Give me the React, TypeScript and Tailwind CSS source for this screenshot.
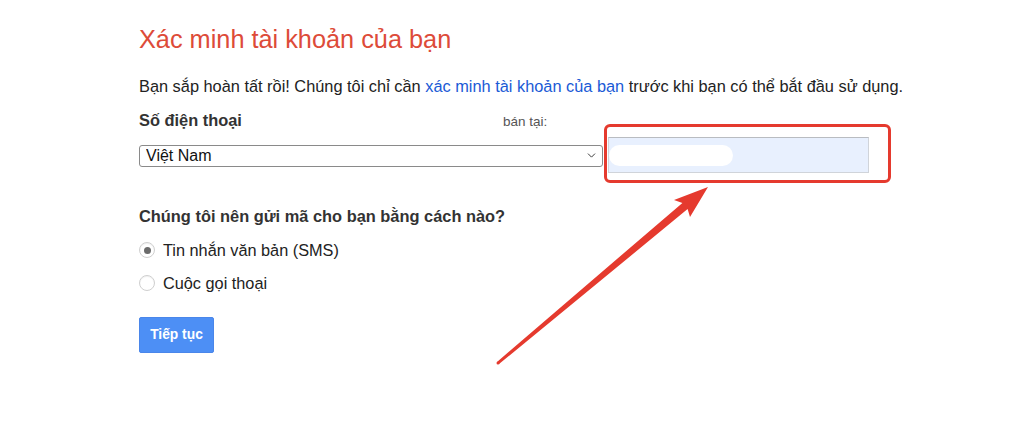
import { ChevronDown } from 'lucide-react'

const Radio = ({ checked, label }: { checked?: boolean; label: string }) => (
  <label className="flex items-center h-5 text-[16.3px] leading-5 text-[#222]">
    <span className="relative w-4 h-4 mr-2 rounded-full border border-[#cfcfcf] bg-white shadow-[inset_0_1px_1px_rgba(0,0,0,0.06)] flex items-center justify-center">
      {checked && <span className="w-[7px] h-[7px] rounded-full bg-[#6b6b6b]" />}
    </span>
    {label}
  </label>
)

const App = () => {
  return (
    <div className="relative w-full h-[447px] bg-white overflow-hidden font-['Liberation_Sans',Arial,sans-serif]">
      <div className="pl-[139px] pt-[24px]">
        {/* Heading */}
        <h1 className="text-[25.3px] leading-[30px] text-[#dd4b39]">Xác minh tài khoản của bạn</h1>

        <p className="mt-[22px] text-[16.35px] leading-5 text-[#222]">
          Bạn sắp hoàn tất rồi! Chúng tôi chỉ cần{' '}
          <a className="text-[#1a5ad6]">xác minh tài khoản của bạn</a> trước khi bạn có thể bắt đầu sử dụng.
        </p>

        <div className="mt-[14px] flex items-baseline">
          <span className="w-[364px] text-[16.4px] leading-5 font-bold text-[#333]">Số điện thoại</span>
          <span className="text-[13.5px] text-[#555]">bán tại:</span>
        </div>

        {/* Phone row */}
        <div className="mt-[5px] flex items-center h-9">
          <div className="relative w-[464px] h-[22px]">
            <select className="appearance-none w-full h-full pl-[6px] pr-6 text-[16px] leading-[18px] text-[#111] bg-white border border-[#8a8a8a] rounded-[3px] outline-none">
              <option>Việt Nam</option>
            </select>
            <ChevronDown className="absolute right-[5px] top-[5px] w-[13px] h-[13px] text-[#333] pointer-events-none" strokeWidth={1.75} />
          </div>
          <div className="relative ml-[5px] w-[261px] h-9">
            <div className="w-full h-full bg-[#e8f0fe] border border-[#d0d4da] border-t-[#b9bcc1] flex items-center">
              <div className="w-[124px] h-[21px] rounded-full bg-white" />
            </div>
            {/* annotation box */}
            <div className="absolute -left-[4px] -top-[13px] -right-[22px] -bottom-[10px] border-[3px] border-[#e53a2e] rounded-[6px] pointer-events-none" />
          </div>
        </div>

        <h2 className="mt-[33px] text-[16.4px] leading-5 font-bold text-[#333]">Chúng tôi nên gửi mã cho bạn bằng cách nào?</h2>

        <div className="mt-[14px]">
          <Radio checked label="Tin nhắn văn bản (SMS)" />
        </div>
        <div className="mt-[13px]">
          <Radio label="Cuộc gọi thoại" />
        </div>

        <button
          type="button"
          className="mt-[24px] w-[75px] h-9 rounded-[2px] bg-[#4d8ff5] border border-[#4a86ea] text-white text-[13.8px] font-bold"
        >
          Tiếp tục
        </button>
      </div>

      {/* annotation arrow */}
      <svg className="absolute inset-0 w-full h-full pointer-events-none" viewBox="0 0 1024 447">
        <polygon
          fill="#e53a2e"
          points="497,361.9 682.4,202.9 674,200 708,187 690,217 687.6,209.1 499,364.1"
        />
        <circle cx="498" cy="363" r="1.5" fill="#e53a2e" />
      </svg>
    </div>
  )
}

export default App
